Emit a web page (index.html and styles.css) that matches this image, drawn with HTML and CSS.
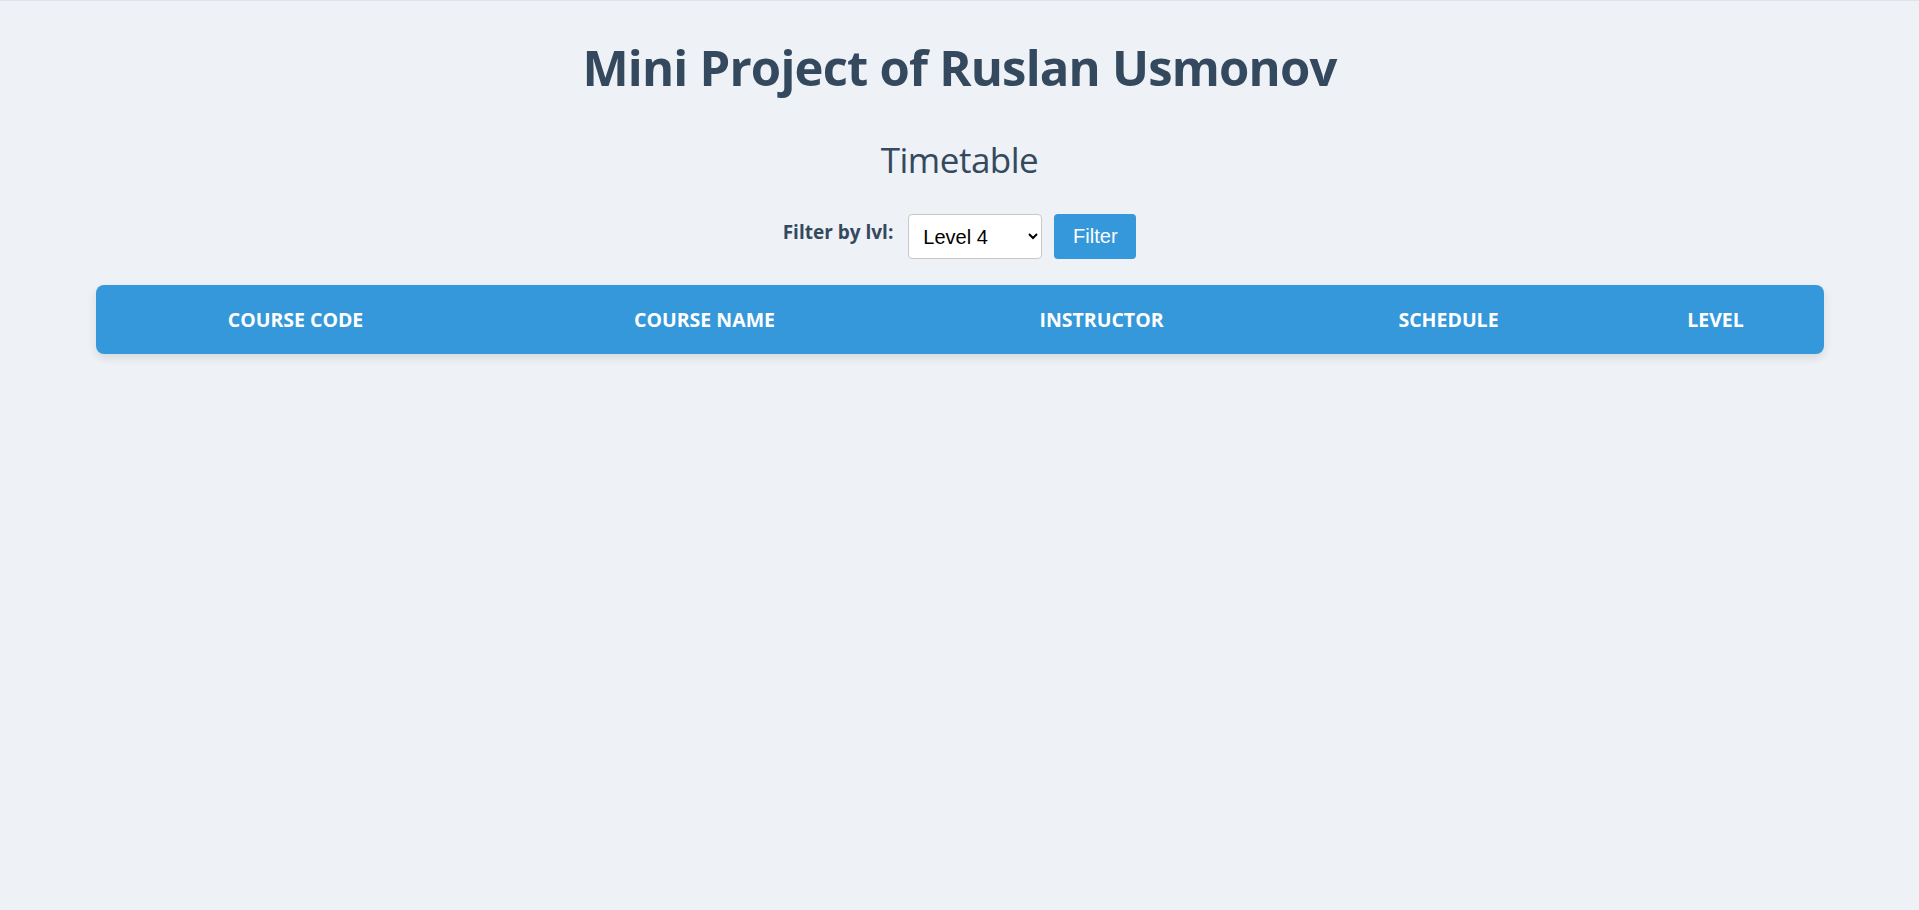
FILE: index.html
```html
<!DOCTYPE html>
<html lang="en">
<head>
<meta charset="utf-8">
<title>Mini Project of Ruslan Usmonov</title>
<link rel="stylesheet" href="styles.css">
</head>
<body>
<h1 class="title">Mini Project of Ruslan Usmonov</h1>
<h2 class="subtitle">Timetable</h2>
<form class="filter-row">
  <label class="filter-label" for="lvl">Filter by lvl:</label>
  <select class="filter-select" id="lvl">
    <option>Level 3</option>
    <option selected>Level 4</option>
    <option>Level 5</option>
    <option>Level 6</option>
  </select>
  <button type="button" class="filter-btn">Filter</button>
</form>
<table class="timetable">
  <thead>
    <tr>
      <th class="c1">Course Code</th>
      <th class="c2">Course Name</th>
      <th class="c3">Instructor</th>
      <th class="c4">Schedule</th>
      <th class="c5">Level</th>
    </tr>
  </thead>
  <tbody></tbody>
</table>
</body>
</html>
```
FILE: styles.css
```css
html, body {
  margin: 0;
  padding: 0;
}
body {
  background: #eef1f6;
  border-top: 1px solid #e5e1eb;
  font-family: "Open Sans", "Noto Sans", sans-serif;
  color: #34495e;
  min-height: 909px;
}
.title {
  margin: 35px 0 0;
  font-size: 49px;
  line-height: 62px;
  letter-spacing: -0.8px;
  font-weight: 700;
  text-align: center;
}
.subtitle {
  margin: 40px 0 0;
  font-size: 35px;
  line-height: 44px;
  letter-spacing: -0.5px;
  font-weight: 400;
  text-align: center;
}
.filter-row {
  margin: 32px 0 0;
  display: flex;
  justify-content: center;
  align-items: flex-start;
  height: 45px;
}
.filter-label {
  font-size: 19px;
  line-height: 24px;
  font-weight: 700;
  padding-top: 6px;
  margin-right: 15px;
}
.filter-select {
  width: 134px;
  height: 45px;
  box-sizing: border-box;
  border: 1px solid #c8c8c8;
  border-radius: 4px;
  background: #fff;
  padding: 0 10px;
  font-family: "Liberation Sans", Arial, sans-serif;
  font-size: 20px;
  color: #000;
  margin-right: 12px;
}
.filter-btn {
  width: 82px;
  height: 45px;
  border: none;
  border-radius: 4px;
  background: #3498db;
  color: #fff;
  font-family: "Liberation Sans", Arial, sans-serif;
  font-size: 20px;
  padding: 0;
}
.timetable {
  margin: 26px auto 0;
  width: 1728px;
  border-collapse: separate;
  border-spacing: 0;
  border-radius: 8px;
  overflow: hidden;
  box-shadow: 0 4px 10px rgba(0, 0, 0, 0.1);
}
.timetable th {
  background: #3498db;
  color: #fff;
  height: 69px;
  padding: 0;
  font-size: 19.5px;
  font-weight: 700;
  text-transform: uppercase;
  text-align: center;
}
.c1 { width: 400px; }
.c2 { width: 418px; }
.c3 { width: 376px; }
.c4 { width: 318px; }
.c5 { width: 216px; }
```
